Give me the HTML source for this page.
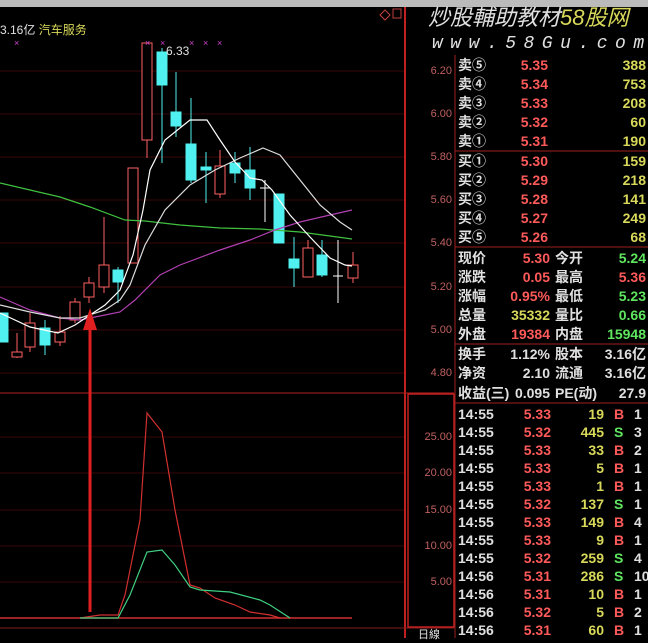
<!DOCTYPE html>
<html><head><meta charset="utf-8"><style>
body{margin:0;background:#000;width:648px;height:638px;overflow:hidden;position:relative;font-family:"Liberation Sans","Noto Sans CJK SC",sans-serif}
.t{position:absolute;white-space:nowrap;font-size:14px;line-height:16px}
#q .t{font-weight:bold}
.r{text-align:right}
.w{color:#e0e0e0}.p{color:#ff5a5a}.y{color:#d8d85a}.g{color:#5fe65f}
.ax{position:absolute;font-size:11px;color:#c06060;text-align:right;width:40px}
</style></head><body>
<div style="position:absolute;left:0;top:0;width:648px;height:7px;background:#bbb"></div>
<svg width="648" height="638" style="position:absolute;left:0;top:0">
<g stroke="#3a0808" stroke-width="1">
<line x1="0" y1="71" x2="404" y2="71"/><line x1="0" y1="114" x2="404" y2="114"/><line x1="0" y1="157" x2="404" y2="157"/><line x1="0" y1="200" x2="404" y2="200"/><line x1="0" y1="243" x2="404" y2="243"/><line x1="0" y1="287" x2="404" y2="287"/><line x1="0" y1="330" x2="404" y2="330"/><line x1="0" y1="373" x2="404" y2="373"/>
<line x1="0" y1="437" x2="404" y2="437"/><line x1="0" y1="473" x2="404" y2="473"/><line x1="0" y1="510" x2="404" y2="510"/><line x1="0" y1="546" x2="404" y2="546"/><line x1="0" y1="582" x2="404" y2="582"/>
</g>
<line x1="405" y1="7" x2="405" y2="638" stroke="#c02020" stroke-width="2"/>
<line x1="0" y1="393" x2="454" y2="393" stroke="#b02020"/>
<line x1="0" y1="628" x2="454" y2="628" stroke="#802020"/>
<rect x="408" y="394" width="46" height="233" fill="none" stroke="#c02020" stroke-width="1.5"/>
<line x1="455" y1="55" x2="455" y2="638" stroke="#a02020"/>
<g stroke="#a02020"><line x1="455" y1="151" x2="648" y2="151"/><line x1="455" y1="247" x2="648" y2="247"/><line x1="455" y1="344" x2="648" y2="344"/><line x1="455" y1="403" x2="648" y2="403"/></g>
<g stroke-width="1">
<g stroke="#ff6060" fill="#000">
<line x1="17" y1="333" x2="17" y2="358"/><rect x="12" y="352" width="10" height="5"/>
<line x1="30" y1="313" x2="30" y2="352"/><rect x="25" y="323" width="10" height="24"/>
<line x1="60" y1="316" x2="60" y2="346"/><rect x="55" y="332" width="10" height="10"/>
<line x1="75" y1="298" x2="75" y2="323"/><rect x="70" y="302" width="10" height="18"/>
<line x1="89" y1="277" x2="89" y2="303"/><rect x="84" y="283" width="10" height="14"/>
<line x1="104" y1="217" x2="104" y2="293"/><rect x="99" y="265" width="10" height="22"/>
<rect x="128" y="168" width="10" height="95"/>
<line x1="147" y1="43" x2="147" y2="158"/><rect x="142" y="43" width="10" height="97"/>
<line x1="220" y1="150" x2="220" y2="198"/><rect x="215" y="166" width="10" height="28"/>
<line x1="308" y1="240" x2="308" y2="277"/><rect x="303" y="248" width="10" height="29"/>
<line x1="353" y1="252" x2="353" y2="283"/><rect x="348" y="265" width="10" height="13"/>
</g>
<g stroke="#50f0f0" fill="#50f0f0">
<rect x="-2" y="313" width="10" height="29"/>
<line x1="45" y1="320" x2="45" y2="355"/><rect x="40" y="328" width="10" height="17"/>
<line x1="118" y1="267" x2="118" y2="303"/><rect x="113" y="270" width="10" height="12"/>
<line x1="162" y1="48" x2="162" y2="163"/><rect x="157" y="52" width="10" height="33"/>
<line x1="176" y1="72" x2="176" y2="137"/><rect x="171" y="112" width="10" height="14"/>
<line x1="191" y1="98" x2="191" y2="183"/><rect x="186" y="144" width="10" height="36"/>
<line x1="206" y1="152" x2="206" y2="203"/><rect x="201" y="167" width="10" height="3"/>
<line x1="235" y1="152" x2="235" y2="183"/><rect x="230" y="163" width="10" height="10"/>
<line x1="250" y1="147" x2="250" y2="200"/><rect x="245" y="170" width="10" height="18"/>
<rect x="274" y="194" width="10" height="49"/>
<line x1="294" y1="237" x2="294" y2="287"/><rect x="289" y="259" width="10" height="9"/>
<line x1="322" y1="240" x2="322" y2="277"/><rect x="317" y="255" width="10" height="20"/>
</g>
<g stroke="#fff"><line x1="265" y1="180" x2="265" y2="222"/><line x1="260" y1="188" x2="270" y2="188"/>
<line x1="338" y1="240" x2="338" y2="303"/><line x1="333" y1="276" x2="343" y2="276"/></g>
</g>
<g fill="none" stroke-width="1.2">
<polyline stroke="#40c040" points="0,183 30,190 60,197 90,207 125,220 145,221 180,225 220,228 260,229 300,232 330,236 352,239"/>
<polyline stroke="#b040b0" points="0,297 30,310 60,318 80,320 105,315 120,312 135,300 160,275 180,265 220,250 250,240 275,230 300,222 330,215 352,210"/>
<polyline stroke="#ddd" points="0,305 30,312 60,318 80,318 105,310 120,300 130,285 145,245 165,210 190,185 215,170 240,158 263,148 280,155 300,180 320,205 340,222 352,230"/>
<polyline stroke="#fff" points="0,313 30,327 58,333 75,325 90,315 105,305 120,290 133,255 143,210 150,170 165,140 190,120 207,120 220,140 235,162 250,178 262,180 272,190 290,215 310,237 330,258 345,265 352,266"/>
</g>
<g fill="#d040d0" font-size="9"><text x="14" y="46">×</text><text x="145" y="46">×</text><text x="160" y="46">×</text><text x="189" y="46">×</text><text x="203" y="46">×</text><text x="217" y="46">×</text></g>
<line x1="0" y1="618" x2="352" y2="618" stroke="#d03030" stroke-width="1.5"/>
<polyline fill="none" stroke="#d03030" stroke-width="1.2" points="80,618 100,615 118,615 125,595 140,520 147,413 162,432 175,510 190,585 200,588 215,598 235,605 250,612 270,615 280,618"/>
<polyline fill="none" stroke="#40d080" stroke-width="1.2" points="80,618 118,618 130,595 147,552 162,550 175,565 190,587 200,590 230,592 260,600 270,605 290,618"/>
<line x1="90" y1="325" x2="90" y2="612" stroke="#e02020" stroke-width="3"/>
<polygon points="90,308 83,330 97,330" fill="#e02020"/>
<g stroke="#c04040" fill="none"><path d="M380 15 l5 -5 l5 5 l-5 5z"/><rect x="393" y="9" width="8" height="9"/></g>
</svg>
<div class="t" style="left:0;top:22px;font-size:12px"><span class="w">3.16亿</span> <span class="y">汽车服务</span></div>
<div class="t w" style="left:166px;top:43px;font-size:12px">6.33</div>
<div class="ax" style="left:412px;top:65px">6.20</div><div class="ax" style="left:412px;top:108px">6.00</div><div class="ax" style="left:412px;top:151px">5.80</div><div class="ax" style="left:412px;top:194px">5.60</div><div class="ax" style="left:412px;top:237px">5.40</div><div class="ax" style="left:412px;top:281px">5.20</div><div class="ax" style="left:412px;top:324px">5.00</div><div class="ax" style="left:412px;top:367px">4.80</div>
<div class="ax" style="left:412px;top:431px">25.00</div><div class="ax" style="left:412px;top:467px">20.00</div><div class="ax" style="left:412px;top:504px">15.00</div><div class="ax" style="left:412px;top:540px">10.00</div><div class="ax" style="left:412px;top:576px">5.00</div>
<div class="t w" style="left:418px;top:627px;font-size:11px">日線</div>
<div class="t" style="left:428px;top:5px;font-size:22px;line-height:26px;font-style:italic"><span class="w">炒股輔助教材</span><span class="y">58股网</span></div>
<div class="t w" style="left:432px;top:33px;font-size:18px;line-height:22px;font-style:italic;letter-spacing:7.5px;font-family:'Liberation Mono',monospace">www.58Gu.com</div>
<div id="q"></div>
<script>
var h='';
function row(y,a){a.forEach(function(c){h+='<div class="t '+c[0]+'" style="top:'+(y-8)+'px;'+c[1]+'">'+c[2]+'</div>';});}
var s=[['卖⑤','5.35','388'],['卖④','5.34','753'],['卖③','5.33','208'],['卖②','5.32','60'],['卖①','5.31','190']];
var b=[['买①','5.30','159'],['买②','5.29','218'],['买③','5.28','141'],['买④','5.27','249'],['买⑤','5.26','68']];
s.forEach(function(r,i){row(65+i*19,[['w','left:458px',r[0]],['p r','right:100px',r[1]],['y r','right:2px',r[2]]]);});
b.forEach(function(r,i){row(161+i*19,[['w','left:458px',r[0]],['p r','right:100px',r[1]],['y r','right:2px',r[2]]]);});
var m=[['现价','p','5.30','今开','g','5.24'],['涨跌','p','0.05','最高','p','5.36'],['涨幅','p','0.95%','最低','g','5.23'],['总量','y','35332','量比','g','0.66'],['外盘','p','19384','内盘','g','15948'],['换手','w','1.12%','股本','w','3.16亿'],['净资','w','2.10','流通','w','3.16亿'],['收益(三)','w','0.095','PE(动)','w','27.9']];
var my=[258,277,296,315,334,354,373,393];
m.forEach(function(r,i){row(my[i],[['w','left:458px',r[0]],[r[1]+' r','right:98px',r[2]],['w','left:555px',r[3]],[r[4]+' r','right:2px',r[5]]]);});
var tr=[['14:55','5.33','19','B','1'],['14:55','5.32','445','S','3'],['14:55','5.33','33','B','2'],['14:55','5.33','5','B','1'],['14:55','5.33','1','B','1'],['14:55','5.32','137','S','1'],['14:55','5.33','149','B','4'],['14:55','5.33','9','B','1'],['14:55','5.32','259','S','4'],['14:56','5.31','286','S','10'],['14:56','5.31','10','B','1'],['14:56','5.32','5','B','2'],['14:56','5.31','60','B','1']];
tr.forEach(function(r,i){var c=r[3]=='B'?'p':'g';row(414+i*18,[['w','left:458px',r[0]],['p r','right:97px',r[1]],['y r','right:44px',r[2]],[c,'left:614px',r[3]],['w','left:634px',r[4]]]);});
document.getElementById('q').innerHTML=h;
</script>
</body></html>
